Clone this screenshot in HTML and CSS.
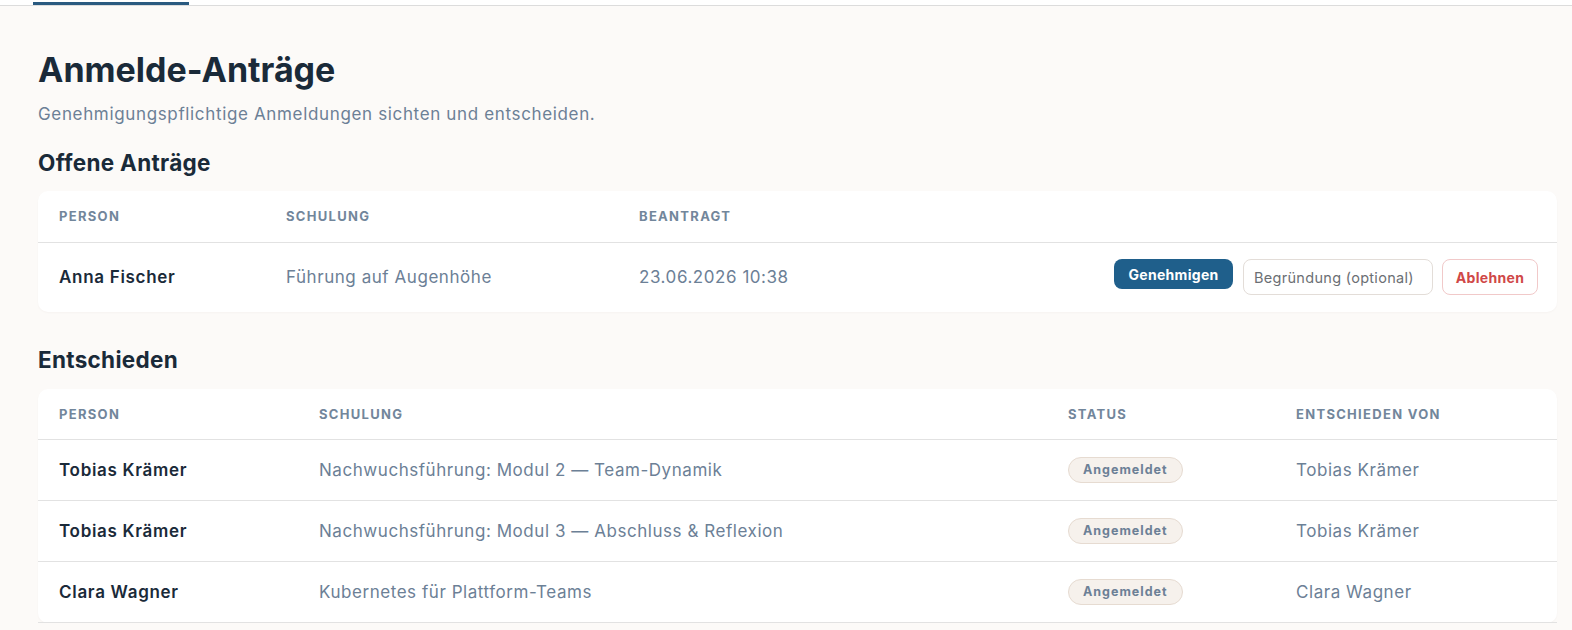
FILE: index.html
```html
<!DOCTYPE html>
<html lang="de">
<head>
<meta charset="utf-8">
<title>Anmelde-Anträge</title>
<link rel="stylesheet" href="styles.css">
</head>
<body>
<div class="tabbar"><div class="tab-active"></div></div>
<main class="page">
  <h1 class="title">Anmelde-Anträge</h1>
  <p class="subtitle">Genehmigungspflichtige Anmeldungen sichten und entscheiden.</p>

  <h2 class="section-title">Offene Anträge</h2>
  <div class="card">
    <table class="table table-open">
      <colgroup>
        <col class="c-person1"><col class="c-schulung1"><col class="c-beantragt"><col>
      </colgroup>
      <thead>
        <tr><th>Person</th><th>Schulung</th><th>Beantragt</th><th></th></tr>
      </thead>
      <tbody>
        <tr>
          <td class="name">Anna Fischer</td>
          <td class="muted">Führung auf Augenhöhe</td>
          <td class="muted">23.06.2026 10:38</td>
          <td class="actions-cell">
            <div class="actions">
              <button class="btn btn-primary">Genehmigen</button>
              <input class="reason" type="text" placeholder="Begründung (optional)">
              <button class="btn btn-danger">Ablehnen</button>
            </div>
          </td>
        </tr>
      </tbody>
    </table>
  </div>

  <h2 class="section-title section-2">Entschieden</h2>
  <div class="card card-2">
    <table class="table table-done">
      <colgroup>
        <col class="c-person2"><col class="c-schulung2"><col class="c-status"><col>
      </colgroup>
      <thead>
        <tr><th>Person</th><th>Schulung</th><th>Status</th><th>Entschieden von</th></tr>
      </thead>
      <tbody>
        <tr>
          <td class="name">Tobias Krämer</td>
          <td class="muted">Nachwuchsführung: Modul 2 — Team-Dynamik</td>
          <td><span class="badge">Angemeldet</span></td>
          <td class="muted">Tobias Krämer</td>
        </tr>
        <tr>
          <td class="name">Tobias Krämer</td>
          <td class="muted">Nachwuchsführung: Modul 3 — Abschluss &amp; Reflexion</td>
          <td><span class="badge">Angemeldet</span></td>
          <td class="muted">Tobias Krämer</td>
        </tr>
        <tr>
          <td class="name">Clara Wagner</td>
          <td class="muted">Kubernetes für Plattform-Teams</td>
          <td><span class="badge">Angemeldet</span></td>
          <td class="muted">Clara Wagner</td>
        </tr>
      </tbody>
    </table>
  </div>
</main>
</body>
</html>
```

FILE: styles.css
```css
* { box-sizing: border-box; }

html, body {
  margin: 0;
  padding: 0;
  background: #fcfaf8;
  font-family: "Inter", "Noto Sans", sans-serif;
  color: #1b2b3a;
}

.tabbar {
  height: 6px;
  border-bottom: 1px solid #dcdcdc;
  padding-left: 33px;
  background: #ffffff;
}

.tab-active {
  width: 156px;
  height: 5px;
  border-bottom: 3px solid #2a5a80;
}

.page {
  padding: 43px 15px 0 38px;
}

.title {
  margin: 0;
  font-size: 34px;
  line-height: 42px;
  font-weight: 700;
  letter-spacing: 0;
  color: #1a2a39;
}

.subtitle {
  margin: 11px 0 0;
  font-size: 17px;
  line-height: 24px;
  letter-spacing: 0.65px;
  color: #6c8096;
}

.section-title {
  margin: 23px 0 0;
  font-size: 22.5px;
  line-height: 28px;
  font-weight: 700;
  letter-spacing: 0.3px;
  color: #1a2a39;
}

.section-2 {
  margin-top: 34px;
}

.card {
  margin-top: 14px;
  background: #ffffff;
  border-radius: 10px;
  box-shadow: 0 1px 2px rgba(60, 40, 20, 0.03);
}

.card-2 {
  margin-top: 15px;
}

.table {
  width: 100%;
  border-collapse: collapse;
  table-layout: fixed;
}

.table th {
  text-align: left;
  font-size: 13px;
  font-weight: 700;
  letter-spacing: 1.3px;
  text-transform: uppercase;
  color: #72869b;
  padding: 0 21px;
  height: 51px;
  border-bottom: 1px solid #e2e2e2;
}

.table td {
  padding: 0 21px;
  font-size: 17px;
  letter-spacing: 0.55px;
  border-bottom: 1px solid #e2e2e2;
  vertical-align: middle;
}

.table-open td {
  height: 70px;
  border-bottom: none;
}

.table td.actions-cell {
  padding-right: 19px;
}

.table-done th { height: 50px; }
.table-done td { height: 61px; }

.c-person1 { width: 227px; }
.c-schulung1 { width: 353px; }
.c-beantragt { width: 400px; }

.c-person2 { width: 260px; }
.c-schulung2 { width: 749px; }
.c-status { width: 228px; }

.name {
  font-weight: 600;
  color: #1a2a39;
}

.table td.name {
  letter-spacing: 0.7px;
}

.muted {
  color: #6c8096;
}

.actions {
  display: flex;
  justify-content: flex-end;
  align-items: flex-start;
}

.btn {
  font-family: inherit;
  font-weight: 700;
  font-size: 14px;
  letter-spacing: 0.3px;
  border-radius: 8px;
  cursor: pointer;
}

.btn-primary {
  width: 119px;
  height: 30px;
  padding: 0;
  background: #1f5f8b;
  color: #ffffff;
  border: none;
}

.reason {
  width: 190px;
  height: 36px;
  margin-left: 10px;
  padding: 0 10px;
  font-family: inherit;
  font-size: 14.5px;
  letter-spacing: 0.3px;
  color: #5f6b77;
  background: #ffffff;
  border: 1px solid #e3ddd8;
  border-radius: 8px;
}

.reason::placeholder {
  color: #6b6f74;
}

.btn-danger {
  width: 96px;
  height: 36px;
  margin-left: 9px;
  padding: 0;
  background: #ffffff;
  color: #d04848;
  border: 1px solid #f1c9c9;
}

.badge {
  display: inline-block;
  height: 26px;
  line-height: 24px;
  padding: 0 14px;
  border-radius: 14px;
  background: #f6f1ec;
  border: 1px solid #e6dbd1;
  font-size: 12.5px;
  font-weight: 700;
  letter-spacing: 1px;
  color: #6c8096;
}
```
